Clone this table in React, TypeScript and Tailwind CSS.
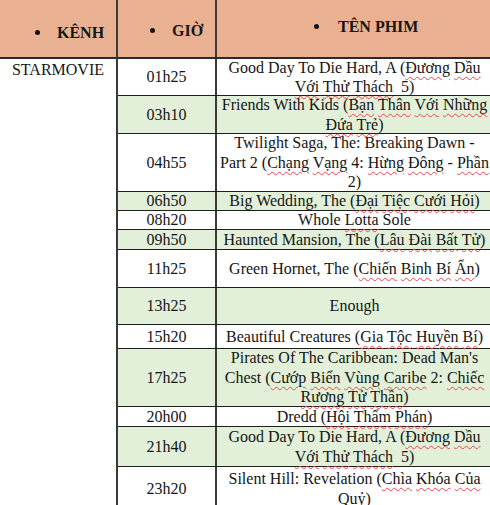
import { Fragment } from 'react';

type ScheduleRow = {
  time: string;
  height: number;
  green?: boolean;
  lines: string[];
};

// words wrapped in {} get the red spell-check squiggle
const ROWS: ScheduleRow[] = [
  { time: '01h25', height: 37, lines: ['Good Day To Die Hard, A ({Đương} {Dầu}', '{Với} {Thử} {Thách}  5)'] },
  { time: '03h10', height: 38, green: true, lines: ['Friends With Kids ({Bạn} {Thân} {Với} {Những}', '{Đứa} {Trẻ})'] },
  { time: '04h55', height: 58, lines: ['Twilight Saga, The: Breaking Dawn -', 'Part 2 ({Chạng} {Vạng} 4: {Hừng} {Đông} - {Phần}', '2)'] },
  { time: '06h50', height: 19, green: true, lines: ['Big Wedding, The ({Đại} {Tiệc} {Cưới} {Hỏi})'] },
  { time: '08h20', height: 19, lines: ['Whole {Lotta} Sole'] },
  { time: '09h50', height: 20, green: true, lines: ['Haunted Mansion, The ({Lâu} {Đài} {Bất} {Tử})'] },
  { time: '11h25', height: 38, lines: ['Green Hornet, The ({Chiến} {Binh} {Bí} {Ẩn})'] },
  { time: '13h25', height: 37, green: true, lines: ['Enough'] },
  { time: '15h20', height: 24, lines: ['Beautiful Creatures ({Gia} {Tộc} {Huyền} {Bí})'] },
  {
    time: '17h25',
    height: 58,
    green: true,
    lines: ["Pirates Of The Caribbean: Dead Man's", 'Chest ({Cướp} {Biển} {Vùng} {Caribe} 2: {Chiếc}', '{Rương} {Tử} {Thần})'],
  },
  { time: '20h00', height: 20, lines: ['Dredd ({Hội} {Thẩm} {Phán})'] },
  { time: '21h40', height: 40, green: true, lines: ['Good Day To Die Hard, A ({Đương} {Dầu}', '{Với} {Thử} {Thách}  5)'] },
  { time: '23h20', height: 44, lines: ['Silent Hill: Revelation ({Chìa} {Khóa} {Của}', '{Quỷ})'] },
];

function Squiggly({ text }: { text: string }) {
  const parts = text.split(/(\{[^}]+\})/);

  return (
    <>
      {parts.map((part, index) =>
        part.startsWith('{') ? (
          <span
            key={index}
            className="underline decoration-wavy decoration-[#e8484c] decoration-1 underline-offset-[3px]"
          >
            {part.slice(1, -1)}
          </span>
        ) : (
          <Fragment key={index}>{part}</Fragment>
        ),
      )}
    </>
  );
}

function HeaderLabel({ label, gap }: { label: string; gap: string }) {
  return (
    <div className={`flex items-center ${gap}`}>
      <span className="h-[5px] w-[5px] shrink-0 rounded-full bg-[#111]" />
      <span className="font-bold">{label}</span>
    </div>
  );
}

export default function App() {
  return (
    <div className="h-[505px] w-[490px] overflow-hidden bg-white">
      <div className="flex w-[492px] font-['Liberation_Serif','Times_New_Roman',serif] text-[16px] leading-[19.5px] text-[#151515]">
        <div className="w-[118px] shrink-0 border-r-2 border-[#3a3a3a]">
          <div className="h-[59px] border-b-2 border-[#2a2a2a] bg-[#e9b192] pt-[23px] pl-[35px]">
            <HeaderLabel label="KÊNH" gap="gap-[17px]" />
          </div>
          <div className="pt-[1px] text-center">STARMOVIE</div>
        </div>

        <div className="min-w-0 flex-1">
          <div className="flex h-[59px] border-b-2 border-[#2a2a2a] bg-[#e9b192]">
            <div className="w-[99px] shrink-0 border-r-2 border-[#3a3a3a] pt-[21px] pl-[32px]">
              <HeaderLabel label="GIỜ" gap="gap-[17px]" />
            </div>
            <div className="flex-1 pt-[17px] pl-[97px]">
              <HeaderLabel label="TÊN PHIM" gap="gap-[19px]" />
            </div>
          </div>

          {ROWS.map((row) => (
            <div
              key={row.time + row.lines[0]}
              style={{ height: row.height }}
              className={`flex border-b border-[#1e1e1e] ${row.green ? 'bg-[#e2efd9]' : 'bg-white'}`}
            >
              <div className="flex w-[99px] shrink-0 items-center justify-center border-r-2 border-[#3a3a3a]">
                {row.time}
              </div>
              <div className="flex flex-1 flex-col items-center justify-center px-[2px]">
                {row.lines.map((line) => (
                  <div key={line} className="whitespace-pre text-center">
                    <Squiggly text={line} />
                  </div>
                ))}
              </div>
            </div>
          ))}
        </div>
      </div>
    </div>
  );
}
